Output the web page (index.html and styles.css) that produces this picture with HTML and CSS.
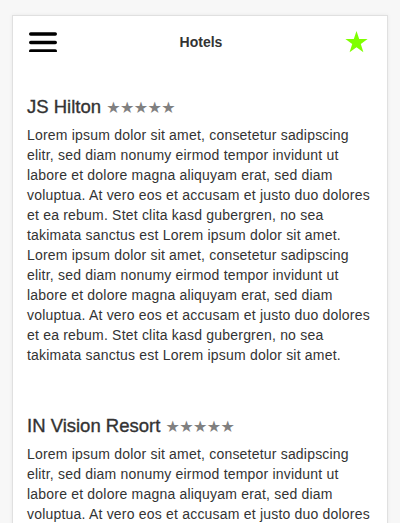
FILE: index.html
```html
<!DOCTYPE html>
<html>
<head>
<meta charset="utf-8">
<link rel="stylesheet" href="styles.css">
</head>
<body>
<div class="card">
  <header class="bar">
    <svg class="menu" width="28" height="20" viewBox="0 0 28 20"><g stroke="#000" stroke-width="3.4" stroke-linecap="round"><line x1="1.7" y1="2" x2="26.3" y2="2"/><line x1="1.7" y1="10.5" x2="26.3" y2="10.5"/><line x1="1.7" y1="19" x2="26.3" y2="19"/></g></svg>
    <h1 class="title">Hotels</h1>
    <svg class="fav" width="23" height="22" viewBox="0 0 24 23"><polygon fill="#7fff00" points="12,0 14.8,8.4 23.6,8.4 16.5,13.7 19.2,22.2 12,17 4.8,22.2 7.5,13.7 0.4,8.4 9.2,8.4"/></svg>
  </header>
  <section class="hotel">
    <h2 class="name">JS Hilton <span class="stars">★★★★★</span></h2>
    <p class="desc">Lorem ipsum dolor sit amet, consetetur sadipscing elitr, sed diam nonumy eirmod tempor invidunt ut labore et dolore magna aliquyam erat, sed diam voluptua. At vero eos et accusam et justo duo dolores et ea rebum. Stet clita kasd gubergren, no sea takimata sanctus est Lorem ipsum dolor sit amet. Lorem ipsum dolor sit amet, consetetur sadipscing elitr, sed diam nonumy eirmod tempor invidunt ut labore et dolore magna aliquyam erat, sed diam voluptua. At vero eos et accusam et justo duo dolores et ea rebum. Stet clita kasd gubergren, no sea takimata sanctus est Lorem ipsum dolor sit amet.</p>
  </section>
  <section class="hotel">
    <h2 class="name">IN Vision Resort <span class="stars">★★★★★</span></h2>
    <p class="desc">Lorem ipsum dolor sit amet, consetetur sadipscing elitr, sed diam nonumy eirmod tempor invidunt ut labore et dolore magna aliquyam erat, sed diam voluptua. At vero eos et accusam et justo duo dolores et ea rebum. Stet clita kasd gubergren, no sea takimata sanctus est Lorem ipsum dolor sit amet.</p>
  </section>
</div>
</body>
</html>
```
FILE: styles.css
```css
html, body {
  margin: 0;
  padding: 0;
  background: #f7f7f7;
  font-family: "Liberation Sans", Arial, sans-serif;
  color: #333;
}
body {
  padding: 15px 12px 0 12px;
}
.card {
  background: #fff;
  border: 1px solid #e0e0e0;
  box-shadow: 0 0 4px rgba(0,0,0,0.06);
  min-height: 600px;
}
.bar {
  display: flex;
  align-items: center;
  justify-content: space-between;
  height: 52px;
  padding: 0 19px 0 16px;
}
.menu { display: block; }
.fav { display: block; }
.title {
  margin: 0;
  font-size: 14px;
  font-weight: bold;
  color: #333;
}
.hotel {
  padding: 27px 14px 22px 14px;
}
.name {
  margin: 0 0 5px 0;
  font-size: 18.5px;
  font-weight: normal;
  -webkit-text-stroke: 0.35px #333;
  color: #333;
  line-height: 24px;
}
.stars {
  font-family: "DejaVu Sans", sans-serif;
  font-size: 16px;
  color: #808080;
  letter-spacing: -0.6px;
  -webkit-text-stroke: 0;
}
.desc {
  margin: 0;
  font-size: 14px;
  line-height: 20px;
  letter-spacing: 0.2px;
}
```
